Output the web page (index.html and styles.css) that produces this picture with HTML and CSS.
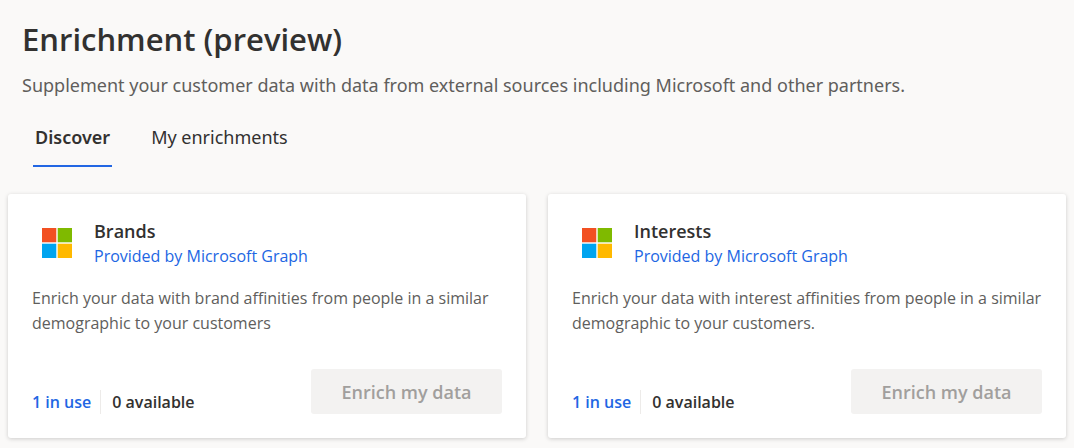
FILE: index.html
```html
<!DOCTYPE html>
<html lang="en">
<head>
<meta charset="utf-8">
<title>Enrichment (preview)</title>
<link rel="stylesheet" href="styles.css">
</head>
<body>
<header class="page-header">
  <h1 class="title">Enrichment (preview)</h1>
  <p class="subtitle">Supplement your customer data with data from external sources including Microsoft and other partners.</p>
  <div class="tabs" role="tablist">
    <button class="tab tab-active" role="tab" aria-selected="true">Discover</button>
    <button class="tab" role="tab" aria-selected="false">My enrichments</button>
  </div>
</header>
<main class="cards">
  <article class="card">
    <div class="card-head">
      <svg class="logo" viewBox="0 0 30 30" aria-hidden="true"><path fill="#f25022" d="M0 0h14.3v14.3H0z"/><path fill="#7fba00" d="M15.7 0H30v14.3H15.7z"/><path fill="#00a4ef" d="M0 15.7h14.3V30H0z"/><path fill="#ffb900" d="M15.7 15.7H30V30H15.7z"/></svg>
      <div>
        <h2 class="card-title">Brands</h2>
        <a class="provider" href="#">Provided by Microsoft Graph</a>
      </div>
    </div>
    <p class="description">Enrich your data with brand affinities from people in a similar demographic to your customers</p>
    <div class="card-foot">
      <div class="counts"><a class="in-use" href="#">1 in use</a><span class="available">0 available</span></div>
      <button class="enrich" disabled>Enrich my data</button>
    </div>
  </article>
  <article class="card">
    <div class="card-head">
      <svg class="logo" viewBox="0 0 30 30" aria-hidden="true"><path fill="#f25022" d="M0 0h14.3v14.3H0z"/><path fill="#7fba00" d="M15.7 0H30v14.3H15.7z"/><path fill="#00a4ef" d="M0 15.7h14.3V30H0z"/><path fill="#ffb900" d="M15.7 15.7H30V30H15.7z"/></svg>
      <div>
        <h2 class="card-title">Interests</h2>
        <a class="provider" href="#">Provided by Microsoft Graph</a>
      </div>
    </div>
    <p class="description">Enrich your data with interest affinities from people in a similar demographic to your customers.</p>
    <div class="card-foot">
      <div class="counts"><a class="in-use" href="#">1 in use</a><span class="available">0 available</span></div>
      <button class="enrich" disabled>Enrich my data</button>
    </div>
  </article>
</main>
</body>
</html>
```
FILE: styles.css
```css
* { box-sizing: border-box; }
body {
  margin: 0;
  background: #faf9f8;
  color: #323130;
  font-family: "Open Sans", "Noto Sans", sans-serif;
  font-size: 16px;
}
h1, h2, p { margin: 0; }
a { color: #2266e3; text-decoration: none; }
button { font-family: inherit; border: 0; }
.page-header { padding: 17px 22px 0; }
.title { font-size: 31px; line-height: 44px; font-weight: 600; }
.subtitle {
  margin-top: 10px;
  font-family: "Noto Sans", sans-serif;
  font-size: 18px;
  line-height: 28px;
  color: #605e5c;
}
.tabs { display: flex; gap: 37px; padding: 25px 11px 0; }
.tab {
  padding: 0 2px 15px;
  background: none;
  border-bottom: 2px solid transparent;
  color: #323130;
  font-family: "Noto Sans", sans-serif;
  font-size: 18px;
  line-height: 26px;
}
.tab-active { font-weight: 600; border-color: #2266e3; }
.cards {
  display: grid;
  grid-template-columns: 1fr 1fr;
  gap: 22px;
  padding: 27px 8px 10px;
}
.card {
  padding: 24px;
  background: #fff;
  border-radius: 3px;
  box-shadow: 0 1px 4px rgba(0, 0, 0, .18);
}
.card-head { display: flex; align-items: center; gap: 22px; padding-left: 10px; }
.logo { width: 30px; height: 30px; flex: none; }
.card-title { font-size: 18px; line-height: 26px; font-weight: 600; }
.provider { display: block; font-size: 16px; line-height: 24px; }
.description { margin-top: 18px; font-size: 16px; line-height: 25px; color: #605e5c; }
.card-foot { display: flex; justify-content: space-between; align-items: flex-end; margin-top: 33px; }
.counts { display: flex; line-height: 24px; font-weight: 600; }
.available { margin-left: 9px; padding-left: 11px; border-left: 1px solid #edebe9; }
.enrich {
  padding: 10px 29px 9px;
  border-radius: 3px;
  background: #f3f2f1;
  color: #a19f9d;
  font-size: 18px;
  line-height: 26px;
  font-weight: 600;
  min-width: 191px;
}
```
